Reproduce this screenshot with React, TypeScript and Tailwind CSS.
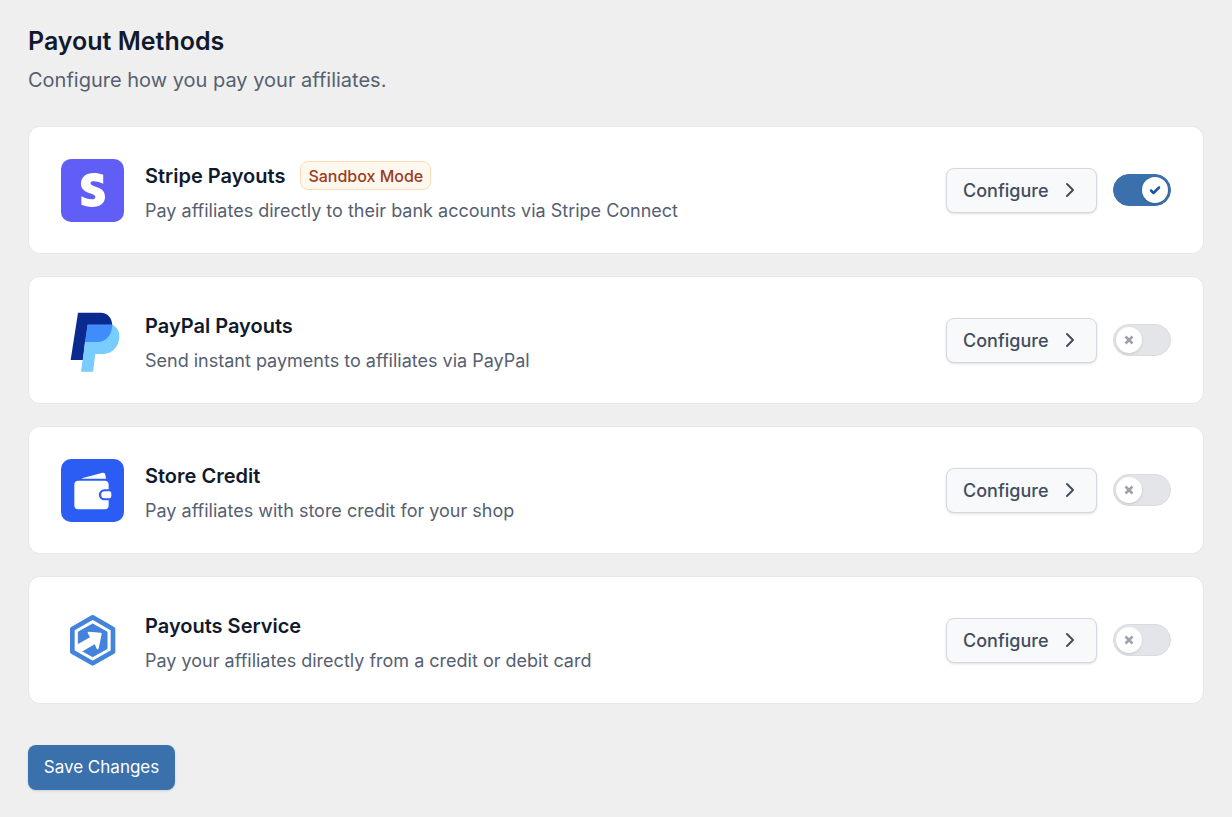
import { useState } from "react";
import type { ReactNode } from "react";
import { FaStripeS } from "react-icons/fa";

type Method = {
  id: string;
  name: string;
  description: string;
  badge?: string;
  enabled: boolean;
  logo: ReactNode;
};

function StripeLogo() {
  return (
    <div className="flex size-full items-center justify-center rounded-[10px] bg-[#615ef8]">
      <FaStripeS className="h-[34px] w-[26px] text-white" />
    </div>
  );
}

function PayPalLogo() {
  return (
    <svg viewBox="33 27 189 189" className="size-full" aria-hidden="true">
      <path d="M84 38H152C173 38 187 54 187 78L150 126H105L99 180H62Z" fill="#0b2a8f" />
      <path
        d="M113 74H187C202 82 209 94 208 112C206 142 186 162 160 162H136L129 215H93Z"
        fill="#7accff"
      />
      <path d="M113 74H187C186 104 168 126 142 126H105Z" fill="#3f8cfb" />
    </svg>
  );
}

function WalletLogo() {
  return (
    <svg viewBox="33 25 189 189" className="size-full" aria-hidden="true">
      <rect x="33" y="25" width="189" height="189" rx="30" fill="#2b5df5" />
      <path d="M96 83L158 66Q165 65 166 72L168 84H96Z" fill="white" />
      <rect x="73" y="90" width="103" height="86" rx="12" fill="white" />
      <path d="M184 116H163A16 16 0 0 0 163 149H184Z" fill="#2b5df5" />
      <path
        d="M178 122H164A10 10 0 0 0 164 143H178Q184 143 184 137V128Q184 122 178 122Z"
        fill="white"
      />
    </svg>
  );
}

function ServiceLogo() {
  return (
    <svg viewBox="33 26 189 189" className="size-full" aria-hidden="true">
      <path
        d="M128 51L189 86V154L128 189L67 154V86Z"
        fill="white"
        stroke="#4483dc"
        strokeWidth="14"
        strokeLinejoin="round"
      />
      <path
        d="M128 71L171 95V145L128 169L85 145V95Z"
        fill="#4483dc"
        stroke="#4483dc"
        strokeWidth="3"
        strokeLinejoin="round"
      />
      <path
        d="M79 134L120 111L113 98Q112 94 116 94L152 97Q156 98 155 102L146 144Q144 149 140 145L134 132L94 155L79 147Z"
        fill="white"
      />
    </svg>
  );
}

const initialMethods: Method[] = [
  {
    id: "stripe",
    name: "Stripe Payouts",
    description: "Pay affiliates directly to their bank accounts via Stripe Connect",
    badge: "Sandbox Mode",
    enabled: true,
    logo: <StripeLogo />,
  },
  {
    id: "paypal",
    name: "PayPal Payouts",
    description: "Send instant payments to affiliates via PayPal",
    enabled: false,
    logo: <PayPalLogo />,
  },
  {
    id: "credit",
    name: "Store Credit",
    description: "Pay affiliates with store credit for your shop",
    enabled: false,
    logo: <WalletLogo />,
  },
  {
    id: "service",
    name: "Payouts Service",
    description: "Pay your affiliates directly from a credit or debit card",
    enabled: false,
    logo: <ServiceLogo />,
  },
];

function Toggle({ label, checked, onChange }: { label: string; checked: boolean; onChange: () => void }) {
  return (
    <label
      className={
        checked
          ? "flex h-8 w-[58px] cursor-pointer items-center justify-end rounded-full border border-[#3a70ab] bg-[#3a70ab] px-[2px]"
          : "flex h-8 w-[58px] cursor-pointer items-center rounded-full border border-[#d9dbdf] bg-[#e4e5e9] px-[2px]"
      }
    >
      <input type="checkbox" className="sr-only" aria-label={label} checked={checked} onChange={onChange} />
      <span className="flex size-[26px] items-center justify-center rounded-full bg-white shadow-sm">
        {checked ? (
          <svg viewBox="0 0 24 24" className="size-3" fill="none" aria-hidden="true">
            <path
              d="M4 13L9 18L20 7"
              stroke="#1f50a8"
              strokeWidth="5"
              strokeLinecap="round"
              strokeLinejoin="round"
            />
          </svg>
        ) : (
          <svg viewBox="0 0 24 24" className="size-3" fill="none" aria-hidden="true">
            <path d="M5 5L19 19M19 5L5 19" stroke="#9ca1ab" strokeWidth="5" />
          </svg>
        )}
      </span>
    </label>
  );
}

export default function App() {
  const [methods, setMethods] = useState(initialMethods);

  const toggle = (id: string) =>
    setMethods(methods.map((m) => (m.id === id ? { ...m, enabled: !m.enabled } : m)));

  return (
    <main className="min-h-screen bg-[#efefef] px-7 py-[25px] font-['Inter',sans-serif]">
      <h1 className="text-[25px] leading-8 font-semibold text-[#111a2c]">Payout Methods</h1>
      <p className="mt-[7px] text-[20px] leading-8 text-[#566070]">Configure how you pay your affiliates.</p>

      <div className="mt-[30px] flex flex-col gap-[22px]">
        {methods.map((m) => (
          <section
            key={m.id}
            className="flex h-32 items-center rounded-xl border border-[#e6e7e9] bg-white px-8"
          >
            <div className="size-[63px] shrink-0">{m.logo}</div>
            <div className="ml-[21px] min-w-0 flex-1 pt-1.5">
              <div className="flex h-8 items-center gap-[15px]">
                <h2 className="text-[20px] leading-8 font-semibold text-[#111a2c]">{m.name}</h2>
                {m.badge && (
                  <span className="flex h-[29px] items-center rounded-lg border border-[#fbdcb3] bg-[#fef8ee] px-[7px] text-[16px] font-medium text-[#9b3d1c]">
                    {m.badge}
                  </span>
                )}
              </div>
              <p className="mt-[3px] text-[18px] leading-8 text-[#566070]">{m.description}</p>
            </div>
            <button
              type="button"
              className="flex h-[45px] w-[151px] items-center justify-between rounded-lg border border-[#d5d8de] bg-[#f8f9fb] pr-5 pl-4 text-[18px] font-medium text-[#434d5c] shadow-sm"
            >
              Configure
              <svg viewBox="0 0 12 16" className="h-4 w-3" fill="none" aria-hidden="true">
                <path
                  d="M3 2L9 8L3 14"
                  stroke="currentColor"
                  strokeWidth="2"
                  strokeLinecap="round"
                  strokeLinejoin="round"
                />
              </svg>
            </button>
            <div className="ml-4">
              <Toggle label={`Enable ${m.name}`} checked={m.enabled} onChange={() => toggle(m.id)} />
            </div>
          </section>
        ))}
      </div>

      <button
        type="button"
        className="mt-[41px] flex h-[45px] w-[147px] items-center justify-center rounded-lg bg-[#3a70ab] text-[17px] text-white shadow-sm"
      >
        Save Changes
      </button>
    </main>
  );
}
